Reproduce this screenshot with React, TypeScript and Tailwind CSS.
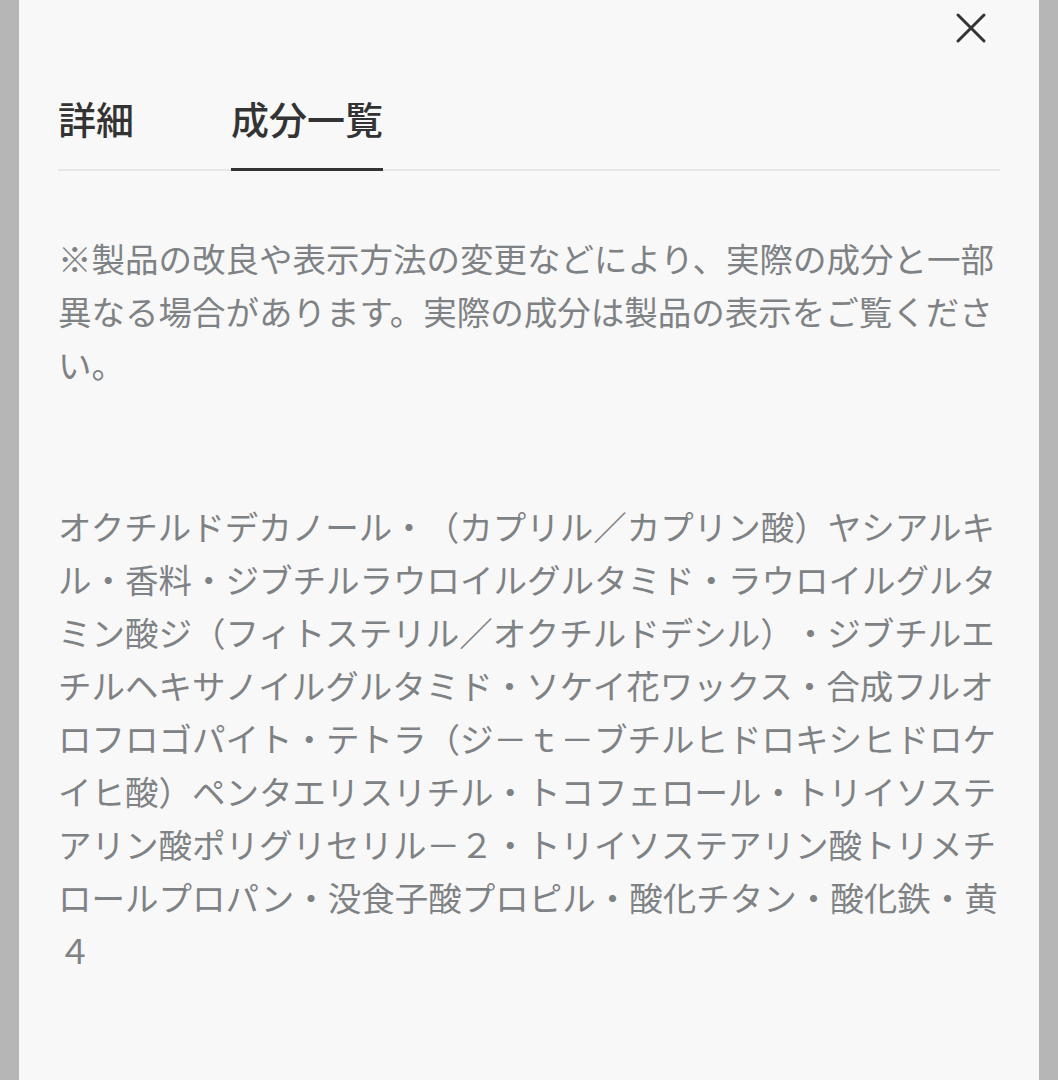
import React from 'react';

const font = { fontFamily: '"Noto Sans CJK JP", "Noto Sans", sans-serif' };

const CloseIcon: React.FC = () => (
  <svg width="34" height="34" viewBox="0 0 34 34" fill="none" stroke="#333" strokeWidth="3" strokeLinecap="round">
    <path d="M4 4 L30 30 M30 4 L4 30" />
  </svg>
);

const App: React.FC = () => {
  return (
    <div className="w-[1058px] h-[1080px] bg-[#b6b6b6] flex px-[19px] overflow-hidden" style={font}>
      <div className="flex-1 bg-[#f8f8f8] px-[39px] relative">
        <button className="absolute top-[11px] right-[51px] p-0">
          <CloseIcon />
        </button>

        {/* tabs */}
        <div className="flex gap-[97px] pt-[90px] border-b-2 border-[#e6e6e6]">
          <div className="text-[38px] leading-[56px] font-medium text-[#333] pb-[23px]">詳細</div>
          <div className="text-[38px] leading-[56px] font-medium text-[#333] pb-[20px] border-b-[3px] border-[#333] -mb-[2px]">成分一覧</div>
        </div>

        <div className="text-[33.5px] leading-[53px] text-[#7e8284] pt-[60px] [text-spacing-trim:space-all]">
          <p>※製品の改良や表示方法の変更などにより、実際の成分と一部異なる場合があります。実際の成分は製品の表示をご覧ください。</p>
          <p className="mt-[109px]">
            オクチルドデカノール・（カプリル／カプリン酸）ヤシアルキル・香料・ジブチルラウロイルグルタミド・ラウロイルグルタミン酸ジ（フィトステリル／オクチルドデシル）・ジブチルエチルヘキサノイルグルタミド・ソケイ花ワックス・合成フルオロフロゴパイト・テトラ（ジ－ｔ－ブチルヒドロキシヒドロケイヒ酸）ペンタエリスリチル・トコフェロール・トリイソステアリン酸ポリグリセリル－２・トリイソステアリン酸トリメチロールプロパン・没食子酸プロピル・酸化チタン・酸化鉄・黄４
          </p>
        </div>
      </div>
    </div>
  );
};

export default App;
